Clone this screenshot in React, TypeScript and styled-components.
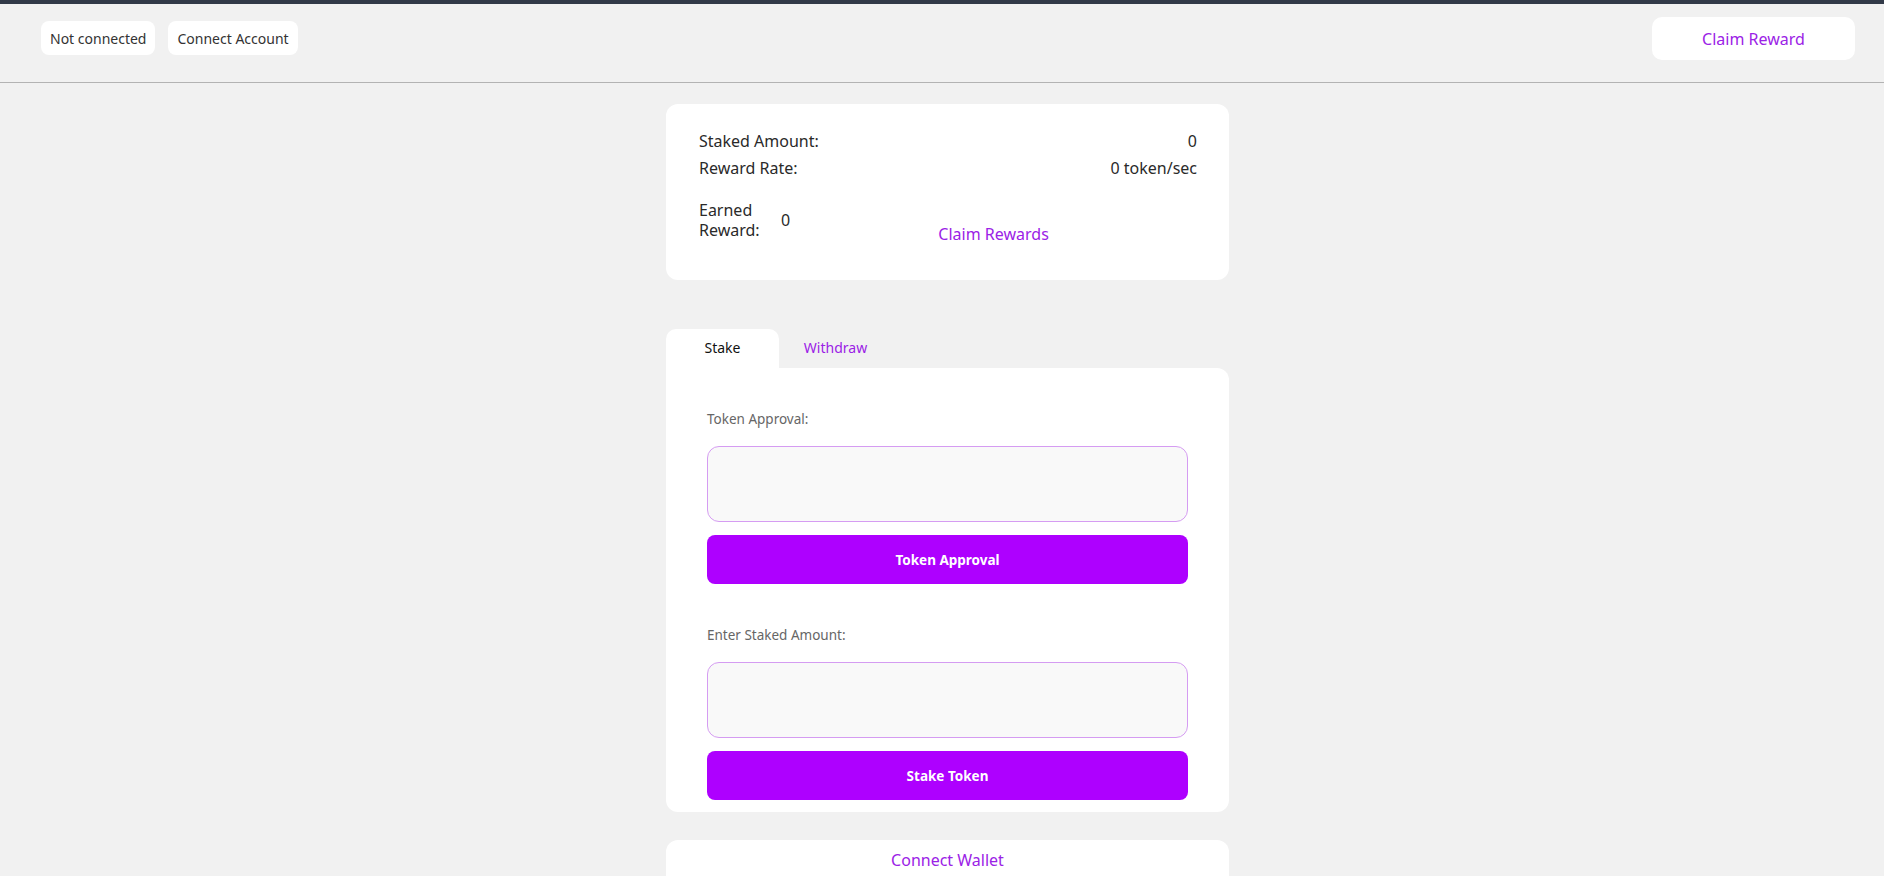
import React, { useState } from 'react';
import styled, { createGlobalStyle } from 'styled-components';

const GlobalStyle = createGlobalStyle`
  * {
    box-sizing: border-box;
  }

  html, body {
    margin: 0;
    padding: 0;
    background: #f1f1f1;
    font-family: 'Noto Sans', 'Lato', sans-serif;
    color: #222;
  }
`;

const TopStripe = styled.div`
  height: 4px;
  background: #323a48;
`;

const Header = styled.header`
  height: 79px;
  display: flex;
  justify-content: space-between;
  align-items: flex-start;
  padding: 0 29px 0 41px;
  border-bottom: 1px solid #b3b3b3;
`;

const HeaderLeft = styled.div`
  display: flex;
  gap: 13px;
  margin-top: 17px;
`;

const Pill = styled.div`
  height: 34px;
  padding: 0 9px;
  display: flex;
  align-items: center;
  background: #fff;
  border-radius: 8px;
  font-size: 14px;
  color: #333;
`;

const ClaimTop = styled.button`
  margin-top: 13px;
  width: 203px;
  height: 43px;
  border: none;
  background: #fff;
  border-radius: 10px;
  font-family: inherit;
  font-size: 16px;
  color: #9b22e6;
  cursor: pointer;
`;

const Page = styled.div`
  display: flex;
  justify-content: center;
  padding-left: 11px;
`;

const Main = styled.main`
  width: 563px;
  margin-top: 21px;
  display: flex;
  flex-direction: column;
`;

const InfoCard = styled.section`
  background: #fff;
  border-radius: 12px;
  padding: 24px 32px 0 33px;
  height: 176px;
`;

const InfoRow = styled.div`
  display: flex;
  justify-content: space-between;
  font-size: 16px;
  line-height: 27px;
  color: #2a2a2a;
`;

const EarnedRow = styled.div`
  display: flex;
  align-items: flex-start;
  margin-top: 18px;
  font-size: 16px;
  color: #2a2a2a;
`;

const EarnedLabel = styled.div`
  width: 64px;
  line-height: 20px;
`;

const EarnedValue = styled.div`
  margin-left: 18px;
  margin-top: 10px;
  line-height: 20px;
`;

const LinkButton = styled.button`
  border: none;
  background: transparent;
  font-family: inherit;
  font-size: 16px;
  line-height: 20px;
  color: #9b22e6;
  cursor: pointer;
  padding: 0;
`;

const ClaimRewards = styled(LinkButton)`
  flex: 1;
  margin-top: 24px;
  text-align: center;
`;

const Tabs = styled.div`
  display: flex;
  margin-top: 49px;
`;

const Tab = styled.button<{ $active?: boolean }>`
  width: 113px;
  height: 39px;
  border: none;
  border-radius: 10px 10px 0 0;
  background: ${(p) => (p.$active ? '#fff' : 'transparent')};
  color: ${(p) => (p.$active ? '#111' : '#9b22e6')};
  font-family: inherit;
  font-size: 14px;
  padding: 0 0 2px;
  cursor: pointer;
`;

const FormCard = styled.section`
  background: #fff;
  border-radius: 0 12px 12px 12px;
  padding: 42px 41px 12px;
`;

const Field = styled.div<{ $gapTop?: number }>`
  display: flex;
  flex-direction: column;
  margin-top: ${(p) => p.$gapTop ?? 0}px;
`;

const Label = styled.label`
  font-size: 13.5px;
  color: #666;
  line-height: 19px;
  margin-bottom: 17px;
`;

const Input = styled.input`
  height: 76px;
  border: 1px solid #d59cf2;
  background: #f9f9f9;
  border-radius: 12px;
  padding: 0 16px;
  font-family: inherit;
  font-size: 16px;
  outline: none;
`;

const PrimaryButton = styled.button`
  margin-top: 13px;
  height: 49px;
  border: none;
  border-radius: 8px;
  background: #ae00ff;
  color: #fff;
  font-family: inherit;
  font-weight: 700;
  font-size: 13.5px;
  cursor: pointer;
`;

const WalletCard = styled.section`
  margin-top: 28px;
  background: #fff;
  border-radius: 12px 12px 0 0;
  padding: 10px 0 20px;
  display: flex;
  justify-content: center;
`;

export default function App() {
  const [tab, setTab] = useState<'stake' | 'withdraw'>('stake');

  return (
    <>
      <GlobalStyle />
      <TopStripe />
      <Header>
        <HeaderLeft>
          <Pill>Not connected</Pill>
          <Pill>Connect Account</Pill>
        </HeaderLeft>
        <ClaimTop>Claim Reward</ClaimTop>
      </Header>

      <Page>
        <Main>
          <InfoCard>
            <InfoRow>
              <span>Staked Amount:</span>
              <span>0</span>
            </InfoRow>
            <InfoRow>
              <span>Reward Rate:</span>
              <span>0 token/sec</span>
            </InfoRow>
            <EarnedRow>
              <EarnedLabel>Earned Reward:</EarnedLabel>
              <EarnedValue>0</EarnedValue>
              <ClaimRewards>Claim Rewards</ClaimRewards>
            </EarnedRow>
          </InfoCard>

          <Tabs>
            <Tab $active={tab === 'stake'} onClick={() => setTab('stake')}>Stake</Tab>
            <Tab $active={tab === 'withdraw'} onClick={() => setTab('withdraw')}>Withdraw</Tab>
          </Tabs>

          <FormCard>
            <Field>
              <Label>Token Approval:</Label>
              <Input type="text" />
              <PrimaryButton>Token Approval</PrimaryButton>
            </Field>
            <Field $gapTop={42}>
              <Label>Enter Staked Amount:</Label>
              <Input type="text" />
              <PrimaryButton>Stake Token</PrimaryButton>
            </Field>
          </FormCard>

          <WalletCard>
            <LinkButton>Connect Wallet</LinkButton>
          </WalletCard>
        </Main>
      </Page>
    </>
  );
}
